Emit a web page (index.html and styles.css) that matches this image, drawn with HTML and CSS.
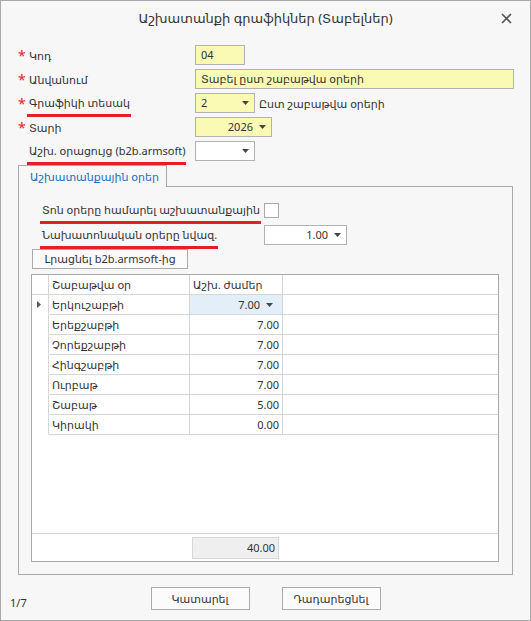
FILE: index.html
```html
<!DOCTYPE html>
<html lang="hy">
<head>
  <meta charset="UTF-8">
  <title>Աշխատանքի գրաֆիկներ</title>
  <link rel="stylesheet" href="styles.css">
</head>
<body>
  <div class="window">
    <div class="titlebar">
      <span></span>
      <div class="title">Աշխատանքի գրաֆիկներ (Տաբելներ)</div>
      <span class="close">
        <svg width="11" height="11" viewBox="0 0 11 11"><path d="M1 1 L10 10 M10 1 L1 10" stroke="#555" stroke-width="1.6" fill="none"/></svg>
      </span>
    </div>

    <div class="form">
      <div class="row">
        <div class="lbl"><span class="req">*</span><span>Կոդ</span></div>
        <div class="inp yellow w-code">04</div>
      </div>
      <div class="row">
        <div class="lbl"><span class="req">*</span><span>Անվանում</span></div>
        <div class="inp yellow w-name">Տաբել ըստ շաբաթվա օրերի</div>
      </div>
      <div class="row">
        <div class="lbl"><span class="req">*</span><span class="mark">Գրաֆիկի տեսակ</span></div>
        <div class="inp sel yellow w-kind"><span>2</span><svg class="arrow" width="7" height="4" viewBox="0 0 7 4"><path d="M0 0 H7 L3.5 4 Z" fill="#444"/></svg></div>
        <span class="hint">Ըստ շաբաթվա օրերի</span>
      </div>
      <div class="row">
        <div class="lbl"><span class="req">*</span><span>Տարի</span></div>
        <div class="inp sel num yellow w-year"><span>2026</span><svg class="arrow" width="7" height="4" viewBox="0 0 7 4"><path d="M0 0 H7 L3.5 4 Z" fill="#444"/></svg></div>
      </div>
      <div class="row">
        <div class="lbl"><span class="req"></span><span class="mark">Աշխ. օրացույց (b2b.armsoft)</span></div>
        <div class="inp sel w-cal"><span></span><svg class="arrow" width="7" height="4" viewBox="0 0 7 4"><path d="M0 0 H7 L3.5 4 Z" fill="#444"/></svg></div>
      </div>
    </div>

    <div class="tabs">
      <div class="tab">Աշխատանքային օրեր</div>
      <div class="panel">
        <div class="opt">
          <div class="opt-lbl"><span class="mark">Տոն օրերը համարել աշխատանքային</span></div>
          <span class="check"></span>
        </div>
        <div class="opt second">
          <div class="opt-lbl"><span class="mark">Նախատոնական օրերը նվազ.</span></div>
          <div class="inp sel num w-spin"><span>1.00</span><svg class="arrow" width="7" height="4" viewBox="0 0 7 4"><path d="M0 0 H7 L3.5 4 Z" fill="#444"/></svg></div>
        </div>
        <div class="btn fill">Լրացնել b2b.armsoft-ից</div>

        <div class="grid">
          <div class="g-row head">
            <div class="c ind"></div>
            <div class="c">Շաբաթվա օր</div>
            <div class="c">Աշխ. ժամեր</div>
            <div class="c"></div>
          </div>
          <div class="g-row">
            <div class="c ind"><svg width="4" height="7" viewBox="0 0 4 7"><path d="M0 0 L4 3.5 L0 7 Z" fill="#555"/></svg></div>
            <div class="c">Երկուշաբթի</div>
            <div class="c num active">7.00<svg class="arrow" width="7" height="4" viewBox="0 0 7 4"><path d="M0 0 H7 L3.5 4 Z" fill="#444"/></svg></div>
            <div class="c"></div>
          </div>
          <div class="g-row">
            <div class="c ind"></div>
            <div class="c">Երեքշաբթի</div>
            <div class="c num">7.00</div>
            <div class="c"></div>
          </div>
          <div class="g-row">
            <div class="c ind"></div>
            <div class="c">Չորեքշաբթի</div>
            <div class="c num">7.00</div>
            <div class="c"></div>
          </div>
          <div class="g-row">
            <div class="c ind"></div>
            <div class="c">Հինգշաբթի</div>
            <div class="c num">7.00</div>
            <div class="c"></div>
          </div>
          <div class="g-row">
            <div class="c ind"></div>
            <div class="c">Ուրբաթ</div>
            <div class="c num">7.00</div>
            <div class="c"></div>
          </div>
          <div class="g-row">
            <div class="c ind"></div>
            <div class="c">Շաբաթ</div>
            <div class="c num">5.00</div>
            <div class="c"></div>
          </div>
          <div class="g-row">
            <div class="c ind"></div>
            <div class="c">Կիրակի</div>
            <div class="c num">0.00</div>
            <div class="c"></div>
          </div>
          <div class="g-empty"></div>
          <div class="g-footer">
            <div class="total">40.00</div>
          </div>
        </div>
      </div>
    </div>

    <div class="bottom">
      <div class="pager">1/7</div>
      <div class="buttons">
        <div class="btn action">Կատարել</div>
        <div class="btn action">Դադարեցնել</div>
      </div>
      <span></span>
    </div>
  </div>
</body>
</html>
```

FILE: styles.css
```css
body {
  margin: 0;
  font-family: "Noto Sans", "DejaVu Sans", sans-serif;
  font-size: 11px;
  color: #333;
}

.window {
  width: 531px;
  height: 621px;
  box-sizing: border-box;
  border: 1px solid #a8a8a8;
  background-color: #f7f7f7;
  display: flex;
  flex-direction: column;
  white-space: nowrap;
}

.titlebar {
  height: 34px;
  display: grid;
  grid-template-columns: 1fr auto 1fr;
  align-items: center;
}

.title {
  font-size: 13px;
  color: #333;
}

.close {
  justify-self: end;
  margin-right: 18px;
  display: flex;
}

.form {
  padding-top: 10px;
  display: flex;
  flex-direction: column;
  gap: 4px;
}

.row {
  height: 20px;
  display: flex;
  align-items: center;
}

.lbl {
  width: 177px;
  padding-left: 17px;
  display: flex;
  align-items: center;
}

.req {
  width: 11px;
  color: #e3262b;
  font-size: 14px;
  line-height: 14px;
  margin-top: 2px;
}

.mark {
  line-height: 16px;
  padding: 0 1px 3px 2px;
  margin: 0 0 -6px -2px;
  border-bottom: 3px solid #e3202a;
}

.inp {
  height: 20px;
  box-sizing: border-box;
  border: 1px solid #b2b2b2;
  background-color: #fff;
  padding: 0 5px;
  display: flex;
  align-items: center;
  line-height: 18px;
}

.yellow {
  background-color: #fafab4;
}

.sel {
  justify-content: space-between;
}

.sel.num {
  justify-content: flex-end;
  gap: 6px;
}

.arrow {
  flex: none;
}

.w-code { width: 50px; }
.w-name { width: 319px; }
.w-kind { width: 60px; }
.w-year { width: 77px; }
.w-cal { width: 60px; }
.w-spin { width: 83px; }

.hint {
  margin-left: 4px;
}

.tabs {
  flex: 1;
  margin: 4px 17px 0;
  display: flex;
  flex-direction: column;
  align-items: flex-start;
}

.tab {
  position: relative;
  z-index: 1;
  width: 149px;
  height: 22px;
  box-sizing: border-box;
  border: 1px solid #a8a8a8;
  border-bottom: none;
  background-color: #f7f7f7;
  color: #1a6dbd;
  padding-left: 11px;
  line-height: 21px;
  margin-bottom: -1px;
}

.panel {
  flex: 1;
  align-self: stretch;
  border: 1px solid #a8a8a8;
  padding: 13px 13px 12px 12px;
  display: flex;
  flex-direction: column;
}

.opt {
  height: 20px;
  margin-left: 8px;
  display: flex;
  align-items: center;
}

.opt.second {
  margin-top: 5px;
}

.opt-lbl {
  flex: 0 0 225px;
  min-width: 0;
  padding-left: 3px;
  box-sizing: border-box;
  display: flex;
  align-items: center;
}

.check {
  width: 13px;
  height: 13px;
  border: 1px solid #aaa;
  background-color: #fff;
}

.btn {
  box-sizing: border-box;
  border: 1px solid #aaa;
  background-color: #fbfbfb;
  text-align: center;
}

.fill {
  align-self: flex-start;
  margin: 4px 0 0 1px;
  height: 20px;
  line-height: 18px;
  width: 156px;
}

.grid {
  flex: 1;
  margin-top: 5px;
  border: 1px solid #a8a8a8;
  background-color: #fff;
  display: flex;
  flex-direction: column;
}

.g-row {
  display: grid;
  grid-template-columns: 17px 141px 93px 1fr;
  height: 20px;
}

.c {
  box-sizing: border-box;
  border-right: 1px solid #d6d6d6;
  border-bottom: 1px solid #d6d6d6;
  padding: 0 3px;
  line-height: 19px;
  overflow: hidden;
}

.c:last-child {
  border-right: none;
}

.c.ind {
  border-bottom-color: transparent;
  display: flex;
  align-items: center;
  padding-left: 5px;
}

.head .c.ind {
  border-bottom-color: #d6d6d6;
}

.c.num {
  text-align: right;
}

.c.active {
  background-color: #e2eff9;
  display: flex;
  align-items: center;
  justify-content: flex-end;
  gap: 6px;
  padding-right: 9px;
}

.g-empty {
  flex: 1;
}

.g-footer {
  height: 28px;
  border-top: 1px solid #d6d6d6;
  box-sizing: border-box;
  padding: 3px 0 0 160px;
}

.total {
  width: 87px;
  height: 22px;
  box-sizing: border-box;
  border: 1px solid #d6d6d6;
  background-color: #efefef;
  text-align: right;
  padding-right: 3px;
  line-height: 20px;
}

.bottom {
  height: 45px;
  display: grid;
  grid-template-columns: 1fr auto 1fr;
  align-items: start;
  padding-top: 12px;
  box-sizing: border-box;
}

.pager {
  padding: 8px 0 0 9px;
  line-height: 16px;
}

.buttons {
  display: flex;
  gap: 32px;
}

.action {
  width: 99px;
  height: 23px;
  line-height: 21px;
}
```
